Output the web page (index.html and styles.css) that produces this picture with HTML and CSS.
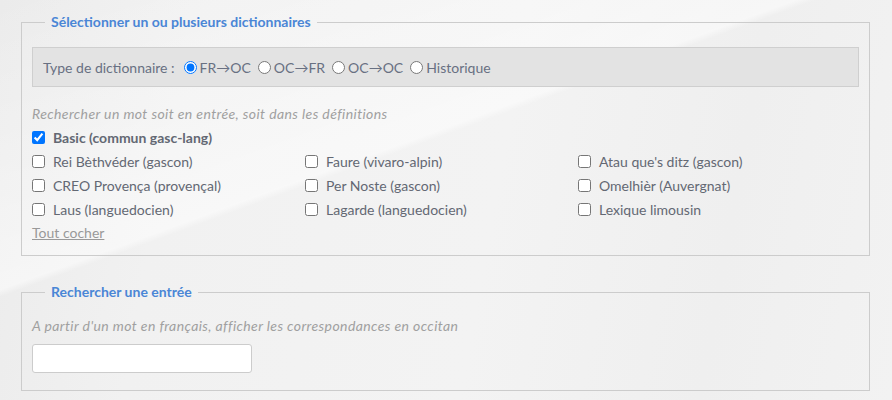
FILE: index.html
```html
<!DOCTYPE html>
<html lang="fr">
<head>
<meta charset="utf-8">
<link rel="stylesheet" href="styles.css">
</head>
<body>
<div class="page">
  <fieldset class="box">
    <legend>Sélectionner un ou plusieurs dictionnaires</legend>
    <div class="type-bar">
      <span class="type-label">Type de dictionnaire :</span>
      <label class="radio"><input type="radio" name="t" checked>FR→OC</label>
      <label class="radio"><input type="radio" name="t">OC→FR</label>
      <label class="radio"><input type="radio" name="t">OC→OC</label>
      <label class="radio"><input type="radio" name="t">Historique</label>
    </div>
    <p class="hint">Rechercher un mot soit en entrée, soit dans les définitions</p>
    <label class="check bold"><input type="checkbox" checked>Basic (commun gasc-lang)</label>
    <div class="dict-grid">
      <label class="check"><input type="checkbox">Rei Bèthvéder (gascon)</label>
      <label class="check"><input type="checkbox">Faure (vivaro-alpin)</label>
      <label class="check"><input type="checkbox">Atau que's ditz (gascon)</label>
      <label class="check"><input type="checkbox">CREO Provença (provençal)</label>
      <label class="check"><input type="checkbox">Per Noste (gascon)</label>
      <label class="check"><input type="checkbox">Omelhièr (Auvergnat)</label>
      <label class="check"><input type="checkbox">Laus (languedocien)</label>
      <label class="check"><input type="checkbox">Lagarde (languedocien)</label>
      <label class="check"><input type="checkbox">Lexique limousin</label>
    </div>
    <a class="all" href="#">Tout cocher</a>
  </fieldset>
  <fieldset class="box second">
    <legend>Rechercher une entrée</legend>
    <p class="hint">A partir d'un mot en français, afficher les correspondances en occitan</p>
    <input class="entry" type="text">
  </fieldset>
</div>
</body>
</html>
```

FILE: styles.css
```css
html, body {
  margin: 0;
  height: 100%;
}
body {
  font-family: Lato, "Open Sans", sans-serif;
  font-size: 14px;
  color: #636873;
  background:
    linear-gradient(160deg, rgba(255,255,255,0) 0%, rgba(255,255,255,0.5) 40%, rgba(255,255,255,0) 41%),
    linear-gradient(100deg, #ebebeb 0%, #f1f1f1 20%, #f3f3f3 55%, #efefef 80%, #f2f2f2 100%);
  overflow: hidden;
}
.page {
  padding: 0 22px 0 21px;
}
.box {
  border: 1px solid #cccccc;
  margin: 12px 0 0;
  padding: 0 10px 14px 10px;
  min-width: 0;
}
.box legend {
  margin-left: 13px;
  padding: 0 6px;
  font-weight: 700;
  font-size: 14px;
  line-height: 20px;
  color: #4a86d6;
}
.second {
  margin-top: 26px;
  padding-bottom: 17px;
}
.type-bar {
  margin-top: 15px;
  height: 38px;
  display: flex;
  align-items: center;
  background: #e3e3e3;
  border: 1px solid #cfcfcf;
  padding: 0 10px;
  color: #687082;
}
.type-label {
  margin-right: 8px;
}
.radio {
  display: inline-flex;
  align-items: center;
  margin-right: 6px;
}
.radio input {
  margin: 0 3px 0 1px;
  width: 13px;
  height: 13px;
}
.hint {
  margin: 18px 0 2px;
  font-style: italic;
  font-size: 14px;
  letter-spacing: 0.4px;
  color: #a0a0a0;
  line-height: 18px;
}
.second .hint {
  margin-top: 15px;
  margin-bottom: 9px;
}
.check {
  display: flex;
  align-items: center;
  height: 24px;
}
.check input {
  margin: 0 8px 0 0;
  width: 13px;
  height: 13px;
}
.bold {
  font-weight: 700;
}
.dict-grid {
  display: grid;
  grid-template-columns: repeat(3, 273px);
}
.all {
  display: inline-block;
  margin-top: 3px;
  color: #999999;
  font-size: 14px;
  text-decoration: underline;
}
.entry {
  display: block;
  width: 220px;
  height: 29px;
  box-sizing: border-box;
  border: 1px solid #cccccc;
  border-radius: 3px;
  background: #ffffff;
  margin: 0;
}
```
